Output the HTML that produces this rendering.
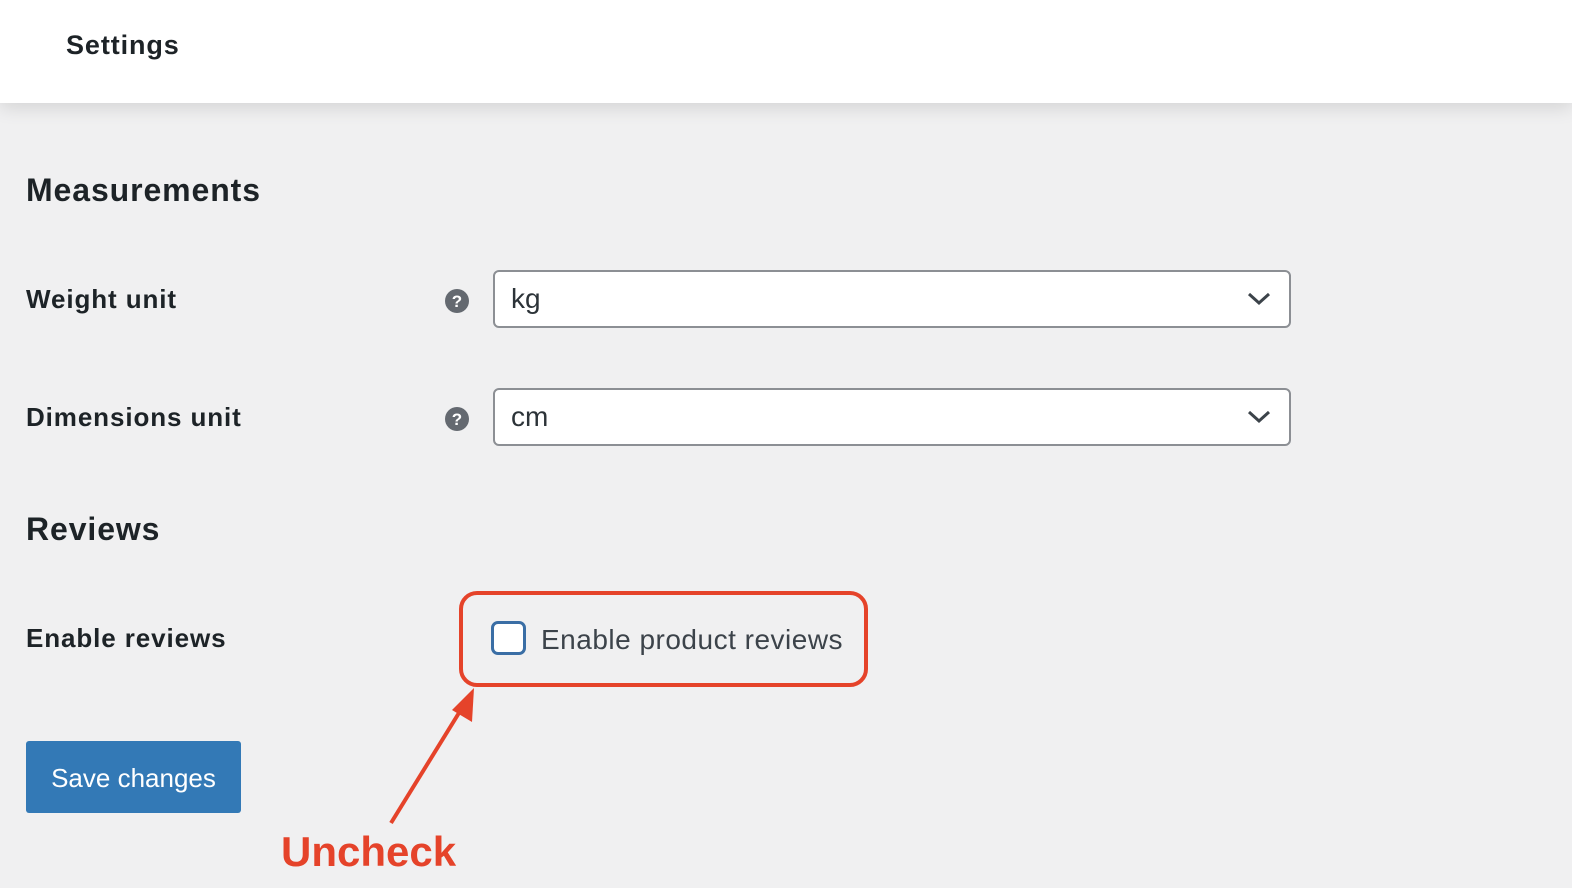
<!DOCTYPE html>
<html><head><meta charset="utf-8"><style>
html,body{margin:0;padding:0}
body{width:1572px;height:888px;background:#f0f0f1;position:relative;overflow:hidden;font-family:"Liberation Sans",sans-serif;color:#1d2327}
.hdr{position:absolute;left:0;top:0;width:1572px;height:103px;background:#fff;box-shadow:0 4px 18px rgba(0,0,0,0.13)}
.abs{position:absolute;white-space:nowrap}
.h2{font-size:32px;font-weight:bold;letter-spacing:0.9px}
.lbl{font-size:26px;font-weight:bold;letter-spacing:0.9px}
.sel{position:absolute;left:493px;width:794px;height:54px;border:2px solid #8c8f94;border-radius:6px;background:#fff}
.sel span{position:absolute;left:16px;top:11px;font-size:28px;color:#2c3338}
.sel svg{position:absolute;right:18px;top:19px}
.help{position:absolute;left:445px;width:24px;height:24px}
</style></head><body>
<div class="hdr"></div>
<div class="abs" style="left:66px;top:30px;font-size:27px;font-weight:bold;letter-spacing:0.9px;">Settings</div>
<div class="abs h2" style="left:26px;top:172px;">Measurements</div>
<div class="abs lbl" style="left:26px;top:284px;">Weight unit</div>
<svg class="help" style="top:289px" viewBox="0 0 24 24"><circle cx="12" cy="12" r="12" fill="#646970"/><text x="12" y="18" text-anchor="middle" font-family="Liberation Sans" font-weight="bold" font-size="17" fill="#fff">?</text></svg>
<div class="sel" style="top:270px"><span>kg</span><svg width="24" height="16" viewBox="0 0 24 16"><path d="M2 3 L12 12 L22 3" fill="none" stroke="#3c434a" stroke-width="3"/></svg></div>
<div class="abs lbl" style="left:26px;top:402px;">Dimensions unit</div>
<svg class="help" style="top:407px" viewBox="0 0 24 24"><circle cx="12" cy="12" r="12" fill="#646970"/><text x="12" y="18" text-anchor="middle" font-family="Liberation Sans" font-weight="bold" font-size="17" fill="#fff">?</text></svg>
<div class="sel" style="top:388px"><span>cm</span><svg width="24" height="16" viewBox="0 0 24 16"><path d="M2 3 L12 12 L22 3" fill="none" stroke="#3c434a" stroke-width="3"/></svg></div>
<div class="abs h2" style="left:26px;top:511px;">Reviews</div>
<div class="abs lbl" style="left:26px;top:623px;">Enable reviews</div>
<div class="abs" style="left:459px;top:591px;width:401px;height:88px;border:4px solid #e5432a;border-radius:18px;"></div>
<div class="abs" style="left:491px;top:621px;width:29px;height:28px;border:3px solid #3a6ea5;border-radius:7px;background:#fff;"></div>
<div class="abs" style="left:541px;top:624px;font-size:28px;color:#3c434a;letter-spacing:0.5px;">Enable product reviews</div>
<div class="abs" style="left:26px;top:741px;width:215px;height:72px;background:#3379b6;border-radius:3px;color:#fff;font-size:26px;line-height:74px;text-align:center;">Save changes</div>
<svg class="abs" style="left:0;top:0" width="1572" height="888"><line x1="391" y1="823" x2="462" y2="708" stroke="#e5432a" stroke-width="4"/><polygon points="474,688 472,722 452,710" fill="#e5432a"/></svg>
<div class="abs" style="left:281px;top:828px;font-size:42px;font-weight:bold;color:#e5432a;">Uncheck</div>
</body></html>
